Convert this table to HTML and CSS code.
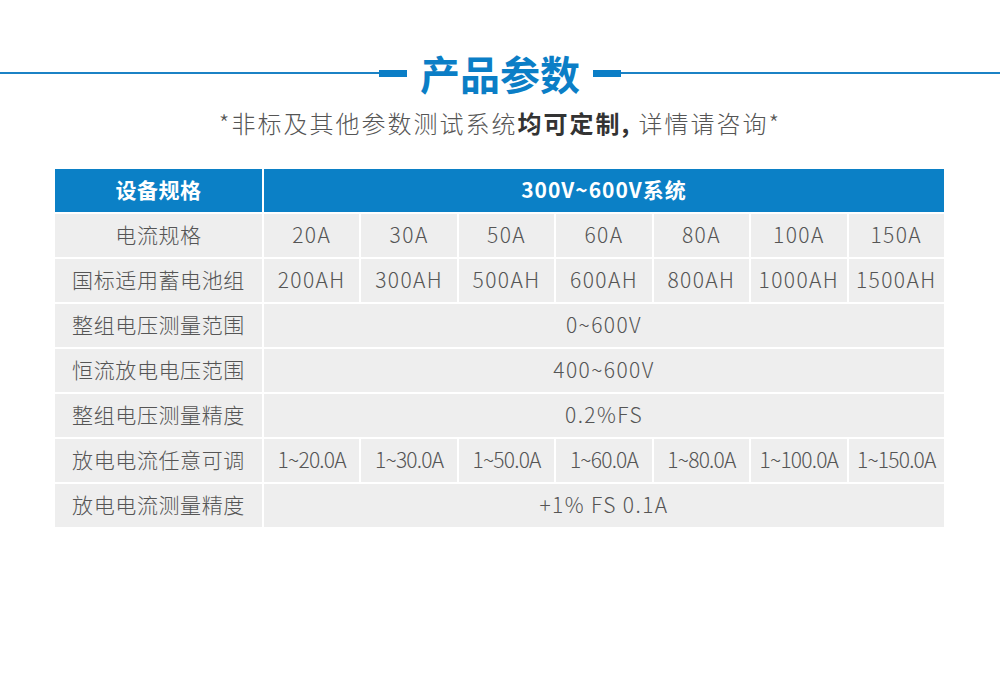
FILE: index.html
```html
<!DOCTYPE html>
<html lang="zh-CN">
<head>
<meta charset="utf-8">
<title>产品参数</title>
<link rel="stylesheet" href="styles.css">
</head>
<body>
<div class="page">
  <div class="title-row">
    <div class="line"></div>
    <div class="bar"></div>
    <h1 class="title">产品参数</h1>
    <div class="bar"></div>
    <div class="line"></div>
  </div>
  <p class="subtitle">*非标及其他参数测试系统<b>均可定制,</b> 详情请咨询*</p>
  <div class="spec">
    <div class="cell head">设备规格</div>
    <div class="cell head span7 wide">300V~600V系统</div>

    <div class="cell label">电流规格</div>
    <div class="cell">20A</div>
    <div class="cell">30A</div>
    <div class="cell">50A</div>
    <div class="cell">60A</div>
    <div class="cell">80A</div>
    <div class="cell">100A</div>
    <div class="cell">150A</div>

    <div class="cell label">国标适用蓄电池组</div>
    <div class="cell">200AH</div>
    <div class="cell">300AH</div>
    <div class="cell">500AH</div>
    <div class="cell">600AH</div>
    <div class="cell">800AH</div>
    <div class="cell">1000AH</div>
    <div class="cell">1500AH</div>

    <div class="cell label">整组电压测量范围</div>
    <div class="cell span7">0~600V</div>

    <div class="cell label">恒流放电电压范围</div>
    <div class="cell span7">400~600V</div>

    <div class="cell label">整组电压测量精度</div>
    <div class="cell span7">0.2%FS</div>

    <div class="cell label">放电电流任意可调</div>
    <div class="cell narrow">1~20.0A</div>
    <div class="cell narrow">1~30.0A</div>
    <div class="cell narrow">1~50.0A</div>
    <div class="cell narrow">1~60.0A</div>
    <div class="cell narrow">1~80.0A</div>
    <div class="cell narrow">1~100.0A</div>
    <div class="cell narrow">1~150.0A</div>

    <div class="cell label">放电电流测量精度</div>
    <div class="cell span7">+1% FS 0.1A</div>
  </div>
</div>
</body>
</html>
```

FILE: styles.css
```css
html, body {
  margin: 0;
  padding: 0;
  background: #ffffff;
}

.page {
  width: 1000px;
  height: 679px;
  font-family: "Noto Sans CJK SC", "Noto Sans", sans-serif;
  color: #555555;
}

.title-row {
  display: flex;
  align-items: center;
  height: 60px;
  padding-top: 43px;
}

.line {
  flex: 1;
  height: 2px;
  background: #1b82c5;
}

.bar {
  width: 28px;
  height: 7px;
  background: #0b7ec6;
}

.title {
  margin: 0 13px;
  font-size: 40px;
  line-height: 60px;
  font-weight: 700;
  color: #0b7ec6;
}

.subtitle {
  margin: 5px 0 0;
  height: 30px;
  line-height: 30px;
  text-align: center;
  font-size: 24px;
  font-weight: 300;
  letter-spacing: 2px;
  color: #555555;
}

.subtitle b {
  font-weight: 700;
  color: #333333;
}

.spec {
  margin: 31px 0 0 55px;
  width: 889px;
  display: grid;
  grid-template-columns: 207px repeat(7, 1fr);
  grid-auto-rows: 43px;
  gap: 2px;
}

.cell {
  display: flex;
  align-items: center;
  justify-content: center;
  padding-bottom: 3px;
  background: #eeeeee;
  font-size: 21px;
  font-weight: 300;
  letter-spacing: 1.4px;
  color: #555555;
  white-space: nowrap;
}

.label {
  letter-spacing: 0.6px;
}

.narrow {
  letter-spacing: -0.8px;
}

.head {
  background: #0b80c6;
  color: #ffffff;
  font-weight: 700;
  font-size: 21px;
  letter-spacing: 0.5px;
}

.head.wide {
  letter-spacing: 1px;
}

.span7 {
  grid-column: span 7;
}
```
